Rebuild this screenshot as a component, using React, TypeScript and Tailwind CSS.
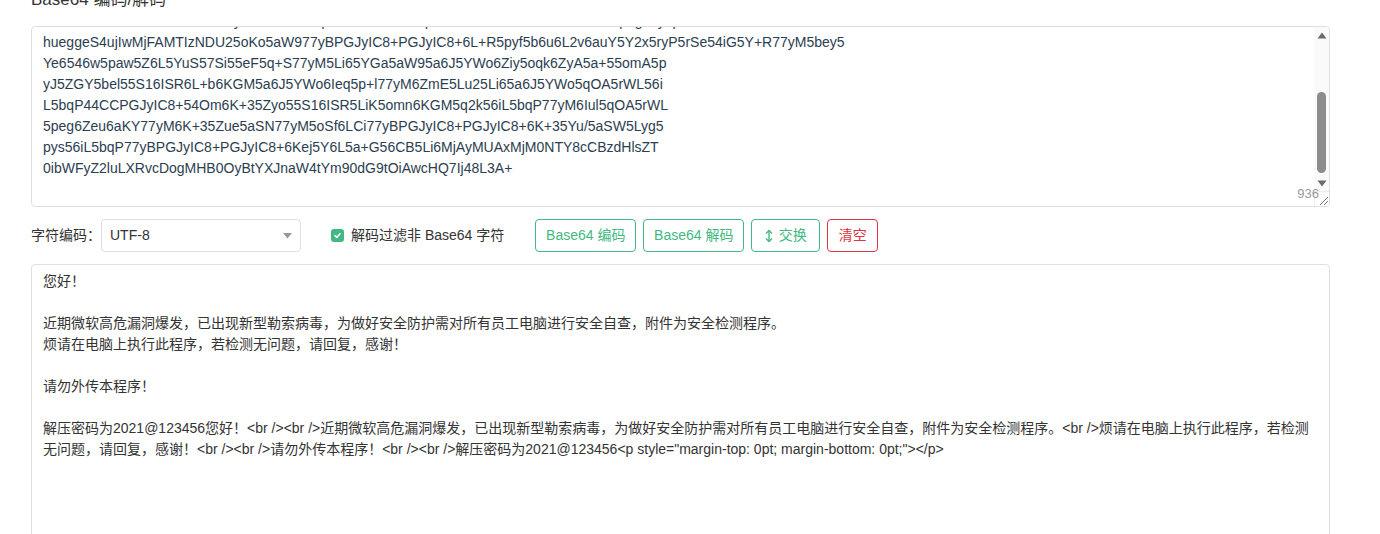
import React from "react";

const topLines = [
  "5L6b5a6J5YWo5L+N5Lu25Li6y5a6J5YWo5qOA5rWL56iL5bqP44CCMTIzNDU2NzY4OTAx5peg5Ly9p",
  "hueggeS4ujIwMjFAMTIzNDU25oKo5aW977yBPGJyIC8+PGJyIC8+6L+R5pyf5b6u6L2v6auY5Y2x5ryP5rSe54iG5Y+R77yM5bey5",
  "Ye6546w5paw5Z6L5YuS57Si55eF5q+S77yM5Li65YGa5aW95a6J5YWo6Ziy5oqk6ZyA5a+55omA5p",
  "yJ5ZGY5bel55S16ISR6L+b6KGM5a6J5YWo6Ieq5p+l77yM6ZmE5Lu25Li65a6J5YWo5qOA5rWL56i",
  "L5bqP44CCPGJyIC8+54Om6K+35Zyo55S16ISR5LiK5omn6KGM5q2k56iL5bqP77yM6Iul5qOA5rWL",
  "5peg6Zeu6aKY77yM6K+35Zue5aSN77yM5oSf6LCi77yBPGJyIC8+PGJyIC8+6K+35Yu/5aSW5Lyg5",
  "pys56iL5bqP77yBPGJyIC8+PGJyIC8+6Kej5Y6L5a+G56CB5Li6MjAyMUAxMjM0NTY8cCBzdHlsZT",
  "0ibWFyZ2luLXRvcDogMHB0OyBtYXJnaW4tYm90dG9tOiAwcHQ7Ij48L3A+",
];

const bottomLines = [
  "您好！",
  "",
  "近期微软高危漏洞爆发，已出现新型勒索病毒，为做好安全防护需对所有员工电脑进行安全自查，附件为安全检测程序。",
  "烦请在电脑上执行此程序，若检测无问题，请回复，感谢！",
  "",
  "请勿外传本程序！",
  "",
  "解压密码为2021@123456您好！<br /><br />近期微软高危漏洞爆发，已出现新型勒索病毒，为做好安全防护需对所有员工电脑进行安全自查，附件为安全检测程序。<br />烦请在电脑上执行此程序，若检测",
  "无问题，请回复，感谢！<br /><br />请勿外传本程序！<br /><br />解压密码为2021@123456<p style=\"margin-top: 0pt; margin-bottom: 0pt;\"></p>",
];

export default function App() {
  return (
    <div className="w-[1380px] h-[534px] overflow-hidden bg-white font-['Liberation_Sans','Noto_Sans_CJK_SC',sans-serif]">
      <div className="pl-[31px] pr-[50px] -mt-[12px]">
        <h2 className="text-[17px] leading-[24px] text-[#333] font-normal mb-[14px]">Base64 编码/解码</h2>

        {/* top textarea */}
        <div className="relative h-[181px] border border-[#dcdfe6] rounded-[4px] overflow-hidden bg-white">
          <div className="-mt-[16px] pl-[11px] text-[14px] leading-[21px] text-[#2c3e50]">
            {topLines.map((l, i) => (
              <div key={i} className="whitespace-pre h-[21px]">{l}</div>
            ))}
          </div>
          {/* scrollbar */}
          <div className="absolute right-0 top-0 w-[15px] h-[164px] bg-[#fafafa] flex flex-col items-center">
            <svg width="10" height="7" viewBox="0 0 10 7" className="mt-[5px]">
              <polygon points="5,0.5 9.5,6.5 0.5,6.5" fill="#6b6b6b" />
            </svg>
            <div className="mt-[53px] w-[9px] h-[81px] rounded-full bg-[#8c8c8c]" />
            <svg width="10" height="7" viewBox="0 0 10 7" className="mt-[7px]">
              <polygon points="0.5,0.5 9.5,0.5 5,6.5" fill="#6b6b6b" />
            </svg>
          </div>
          {/* resize corner */}
          <div className="absolute right-0 bottom-0 w-[15px] h-[15px] border-l border-t border-[#ececec] bg-white">
            <svg width="15" height="15" viewBox="0 0 15 15">
              <line x1="13" y1="5" x2="5" y2="13" stroke="#777" strokeWidth="1" />
              <line x1="13" y1="9" x2="9" y2="13" stroke="#777" strokeWidth="1" />
            </svg>
          </div>
          <div className="absolute right-[10px] bottom-[5px] text-[13px] leading-[14px] text-[#9a9a9a]">936</div>
        </div>

        {/* controls */}
        <div className="mt-[12px] h-[33px] flex items-center text-[14px]">
          <span className="text-[#333]">字符编码：</span>
          <div className="w-[200px] h-[33px] border border-[#dcdfe6] rounded-[4px] flex items-center justify-between pl-[8px] pr-[8px] text-[#333]">
            <span>UTF-8</span>
            <svg width="9" height="6" viewBox="0 0 9 6">
              <polygon points="0,0 9,0 4.5,5.5" fill="#999" />
            </svg>
          </div>
          <div className="ml-[30px] flex items-center">
            <div className="w-[13px] h-[13px] rounded-[3px] bg-[#42b983] flex items-center justify-center">
              <svg width="9" height="9" viewBox="0 0 9 9">
                <polyline points="2,4.7 3.8,6.4 7,2.8" fill="none" stroke="#fff" strokeWidth="1.6" strokeLinecap="round" strokeLinejoin="round" />
              </svg>
            </div>
            <span className="ml-[7px] text-[#333]">解码过滤非 Base64 字符</span>
          </div>
          <div className="ml-[31px] flex items-center gap-[7px]">
            <button className="w-[101px] h-[33px] border border-[#42b983] rounded-[4px] text-[#42b983] bg-white flex items-center justify-center">Base64 编码</button>
            <button className="w-[101px] h-[33px] border border-[#42b983] rounded-[4px] text-[#42b983] bg-white flex items-center justify-center">Base64 解码</button>
            <button className="w-[69px] h-[33px] border border-[#42b983] rounded-[4px] text-[#42b983] bg-white flex items-center justify-center gap-[6px]">
              <svg width="8" height="14" viewBox="0 0 8 14">
                <line x1="4" y1="1.5" x2="4" y2="12.5" stroke="#42b983" strokeWidth="1.4" />
                <polyline points="1,4.5 4,1.5 7,4.5" fill="none" stroke="#42b983" strokeWidth="1.4" />
                <polyline points="1,9.5 4,12.5 7,9.5" fill="none" stroke="#42b983" strokeWidth="1.4" />
              </svg>
              <span>交换</span>
            </button>
            <button className="w-[51px] h-[33px] border border-[#dc3545] rounded-[4px] text-[#dc3545] bg-white flex items-center justify-center">清空</button>
          </div>
        </div>

        {/* bottom textarea */}
        <div className="mt-[12px] h-[300px] border border-[#dcdfe6] rounded-[4px] overflow-hidden bg-white">
          <div className="pt-[6px] pl-[11px] text-[14px] leading-[21px] text-[#333]">
            {bottomLines.map((l, i) => (
              <div key={i} className="whitespace-pre h-[21px]">{l}</div>
            ))}
          </div>
        </div>
      </div>
    </div>
  );
}
